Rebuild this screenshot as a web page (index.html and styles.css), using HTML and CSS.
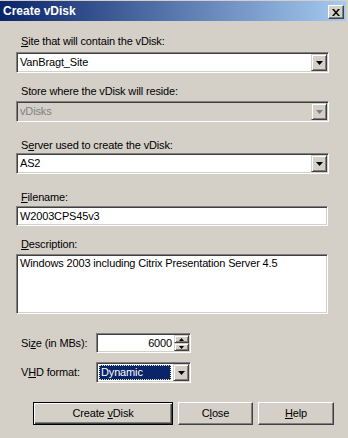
FILE: index.html
```html
<!DOCTYPE html>
<html>
<head>
<meta charset="utf-8">
<link rel="stylesheet" href="styles.css">
</head>
<body>
<div class="window">
  <div class="titlebar">
    <span class="title">Create vDisk</span>
    <span class="capbtn"><svg width="8" height="7" viewBox="0 0 8 7"><path d="M0 0h2l2 2.5L6 0h2L5 3.5 8 7H6L4 4.5 2 7H0l3-3.5z" fill="#000"/></svg></span>
  </div>
  <div class="content">
    <div class="label l1"><u>S</u>ite that will contain the vDisk:</div>
    <div class="combo c1"><span class="val">VanBragt_Site</span><span class="dbtn"><svg width="7" height="4" viewBox="0 0 7 4"><path d="M0 0h7L3.5 4z" fill="#000"/></svg></span></div>

    <div class="label l2">Store where the vDisk will reside:</div>
    <div class="combo disabled c2"><span class="val">vDisks</span><span class="dbtn"><svg width="7" height="4" viewBox="0 0 7 4"><path d="M0 0h7L3.5 4z" fill="#808080"/></svg></span></div>

    <div class="label l3">S<u>e</u>rver used to create the vDisk:</div>
    <div class="combo c3"><span class="val">AS2</span><span class="dbtn"><svg width="7" height="4" viewBox="0 0 7 4"><path d="M0 0h7L3.5 4z" fill="#000"/></svg></span></div>

    <div class="label l4"><u>F</u>ilename:</div>
    <div class="edit e1">W2003CPS45v3</div>

    <div class="label l5"><u>D</u>escription:</div>
    <div class="edit memo">Windows 2003 including Citrix Presentation Server 4.5</div>

    <div class="row r1">
      <div class="rlabel">Si<u>z</u>e (in MBs):</div>
      <div class="spin">
        <span class="sval">6000</span>
        <span class="sbtns">
          <span class="sbtn"><svg width="5" height="3" viewBox="0 0 5 3"><path d="M2.5 0L5 3H0z" fill="#000"/></svg></span>
          <span class="sbtn"><svg width="5" height="3" viewBox="0 0 5 3"><path d="M0 0h5L2.5 3z" fill="#000"/></svg></span>
        </span>
      </div>
    </div>

    <div class="row r2">
      <div class="rlabel">V<u>H</u>D format:</div>
      <div class="combo small"><span class="val sel"><span class="seltext">Dynamic</span></span><span class="dbtn"><svg width="7" height="4" viewBox="0 0 7 4"><path d="M0 0h7L3.5 4z" fill="#000"/></svg></span></div>
    </div>

    <div class="buttons">
      <div class="btn default"><span class="btnin">Create <u>v</u>Disk</span></div>
      <div class="btn b2"><span class="btnin">C<u>l</u>ose</span></div>
      <div class="btn b3"><span class="btnin"><u>H</u>elp</span></div>
    </div>
  </div>
</div>
</body>
</html>
```

FILE: styles.css
```css
html, body {
  margin: 0;
  padding: 0;
  background: #d4d0c8;
}
body {
  font-family: "Liberation Sans", Arial, sans-serif;
  font-size: 11px;
  line-height: 13px;
  letter-spacing: -0.15px;
  color: #000;
}
.window {
  width: 348px;
  height: 438px;
  padding-top: 1px;
  box-sizing: border-box;
  background: #d4d0c8;
  overflow: hidden;
}
.titlebar {
  width: 346px;
  height: 20px;
  box-sizing: border-box;
  padding: 0 2px 0 3px;
  background: linear-gradient(to right, #0a246a, #a6caf0);
  display: flex;
  align-items: center;
  justify-content: space-between;
}
.title {
  color: #fff;
  font-weight: bold;
  font-size: 12px;
  letter-spacing: 0;
}
.capbtn {
  width: 16px;
  height: 14px;
  box-sizing: border-box;
  background: #d4d0c8;
  border: 1px solid;
  border-color: #fff #404040 #404040 #fff;
  box-shadow: inset -1px -1px #808080;
  display: flex;
  align-items: center;
  justify-content: center;
  margin-top: 2px;
}
.content {
  padding-left: 16px;
  display: flex;
  flex-direction: column;
}
.label {
  padding-left: 5px;
  height: 13px;
}
.l1 { margin-top: 14px; }
.c1 { margin-top: 4px; }
.l2 { margin-top: 12px; }
.c2 { margin-top: 3px; }
.l3 { margin-top: 17px; }
.c3 { margin-top: 1px; }
.l4 { margin-top: 17px; }
.e1 { margin-top: 2px; }
.l5 { margin-top: 12px; }
.memo { margin-top: 3px; }
.r1 { margin-top: 19px; }
.r2 { margin-top: 9px; }
.buttons { margin-top: 19px; }

.combo, .edit, .spin {
  box-sizing: border-box;
  background: #fff;
  border: 1px solid;
  border-color: #808080 #fff #fff #808080;
  box-shadow: inset 1px 1px #404040, inset -1px -1px #d4d0c8;
}
.combo {
  width: 313px;
  height: 21px;
  display: flex;
  align-items: center;
  padding: 1px;
}
.combo .val {
  flex: 1;
  padding-left: 2px;
  height: 13px;
}
.combo.disabled {
  background: #d4d0c8;
}
.combo.disabled .val {
  color: #808080;
}
.dbtn, .sbtn {
  box-sizing: border-box;
  background: #d4d0c8;
  border: 1px solid;
  border-color: #d4d0c8 #404040 #404040 #d4d0c8;
  box-shadow: inset 1px 1px #fff, inset -1px -1px #808080;
  display: flex;
  align-items: center;
  justify-content: center;
}
.dbtn {
  width: 16px;
  height: 17px;
}
.edit {
  width: 312px;
  padding: 1px 3px;
}
.e1 {
  height: 20px;
  padding-top: 3px;
}
.memo {
  height: 60px;
  padding-top: 2px;
}
.row {
  display: flex;
  align-items: center;
}
.rlabel {
  width: 75px;
  padding-left: 5px;
}
.spin {
  width: 95px;
  height: 20px;
  display: flex;
  padding: 1px;
}
.sval {
  flex: 1;
  text-align: right;
  padding-right: 2px;
  padding-top: 2px;
}
.sbtns {
  width: 15px;
  display: flex;
  flex-direction: column;
}
.sbtn {
  height: 8px;
}
.combo.small {
  width: 95px;
}
.val.sel {
  padding: 0 2px 0 1px;
  height: 17px;
  display: flex;
  align-items: center;
}
.seltext {
  flex: 1;
  height: 15px;
  box-sizing: border-box;
  background: #0a246a;
  color: #fff;
  border: 1px dotted #e6e6b0;
  padding-left: 1px;
  line-height: 13px;
}
.buttons {
  display: flex;
  gap: 5px;
  padding-left: 17px;
}
.btn {
  height: 23px;
  box-sizing: border-box;
  background: #d4d0c8;
  border: 1px solid;
  border-color: #fff #404040 #404040 #fff;
  box-shadow: inset -1px -1px #808080;
  display: flex;
  align-items: center;
  justify-content: center;
}
.btn.default {
  width: 140px;
  border: 1px solid #000;
  box-shadow: inset 1px 1px #fff, inset -1px -1px #404040, inset -2px -2px #808080;
}
.b2 { width: 75px; }
.b3 { width: 76px; }
```
